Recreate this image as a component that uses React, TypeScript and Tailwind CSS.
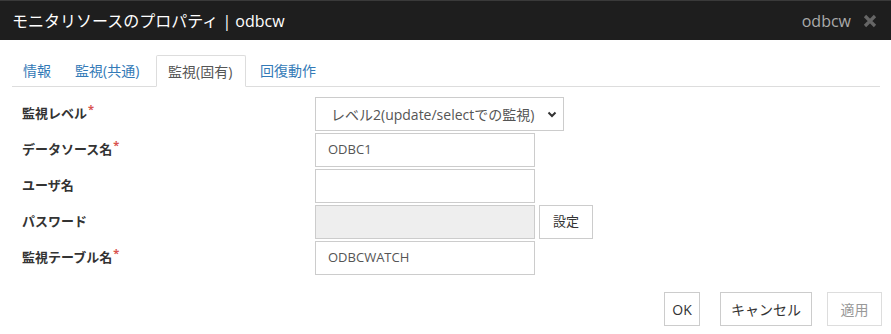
const font = "[font-family:'Open_Sans','Noto_Sans_CJK_JP',sans-serif]";

function Req() {
  return <span className="relative -top-[5px] ml-[1px] text-[11px] text-[#d9534f]">*</span>;
}

export default function App() {
  return (
    <div className={`w-[891px] h-[334px] bg-white text-[#333] ${font}`}>
      {/* title bar */}
      <div className="h-10 bg-[#1e1e1e] border-t border-[#3a3a3a] flex items-center justify-between pl-3 pr-[14px]">
        <div className="text-white text-[16px]">モニタリソースのプロパティ | odbcw</div>
        <div className="flex items-center gap-[12px]">
          <span className="text-[#aaa] text-[16px]">odbcw</span>
          <svg width="14" height="14" viewBox="0 0 14 14">
            <path d="M2 2 L12 12 M12 2 L2 12" stroke="#666" strokeWidth="3.2" strokeLinecap="butt" />
          </svg>
        </div>
      </div>

      <div className="pl-3 pr-[11px]">
        {/* tabs */}
        <div className="mt-[15px] h-[32px] flex items-end border-b border-[#ddd] text-[14px]">
          <div className="w-[50px] pl-[11px] mr-[2px] h-[31px] flex items-center text-[#337ab7]">情報</div>
          <div className="w-[90px] pl-[11px] mr-[2px] h-[31px] flex items-center text-[#337ab7]">監視(共通)</div>
          <div className="w-[90px] pl-[11px] mr-[2px] h-[32px] -mb-px flex items-center bg-white border border-[#ddd] border-b-white rounded-t-[2px] text-[#555]">
            監視(固有)
          </div>
          <div className="pl-[12px] h-[31px] flex items-center text-[#337ab7]">回復動作</div>
        </div>

        {/* form */}
        <div className="mt-[10px] flex flex-col gap-[2px] text-[13px]">
          <div className="flex items-center h-[34px]">
            <div className="w-[303px] pl-[10px] font-bold">監視レベル<Req /></div>
            <div className="w-[249px] h-[34px] border border-[#ccc] flex items-center justify-between pl-[15px] pr-[6px] text-[14px] text-[#555]">
              <span>レベル2(update/selectでの監視)</span>
              <svg width="10" height="8" viewBox="0 0 10 8"><path d="M1.5 2.5 L5 6 L8.5 2.5" fill="none" stroke="#333" strokeWidth="2" /></svg>
            </div>
          </div>
          <div className="flex items-center h-[34px]">
            <div className="w-[303px] pl-[10px] font-bold">データソース名<Req /></div>
            <div className="w-[220px] h-[34px] border border-[#ccc] flex items-center px-3 text-[#555]">ODBC1</div>
          </div>
          <div className="flex items-center h-[34px]">
            <div className="w-[303px] pl-[10px] font-bold">ユーザ名</div>
            <div className="w-[220px] h-[34px] border border-[#ccc]" />
          </div>
          <div className="flex items-center h-[34px]">
            <div className="w-[303px] pl-[10px] font-bold">パスワード</div>
            <div className="w-[220px] h-[34px] border border-[#ccc] bg-[#eee]" />
            <button className="ml-[4px] w-[54px] h-[34px] border border-[#ccc] bg-white text-[#333]">設定</button>
          </div>
          <div className="flex items-center h-[34px]">
            <div className="w-[303px] pl-[10px] font-bold">監視テーブル名<Req /></div>
            <div className="w-[220px] h-[34px] border border-[#ccc] flex items-center px-3 text-[#555]">ODBCWATCH</div>
          </div>
        </div>

        {/* footer buttons */}
        <div className="mt-[17px] flex justify-end mr-[-2px] text-[14px]">
          <button className="w-[36px] h-[34px] border border-[#ccc] bg-white text-[#333]">OK</button>
          <button className="ml-[20px] w-[92px] h-[34px] border border-[#ccc] bg-white text-[#333]">キャンセル</button>
          <button className="ml-[15px] w-[55px] h-[34px] border border-[#ddd] bg-white text-[#999]">適用</button>
        </div>
      </div>
    </div>
  );
}
